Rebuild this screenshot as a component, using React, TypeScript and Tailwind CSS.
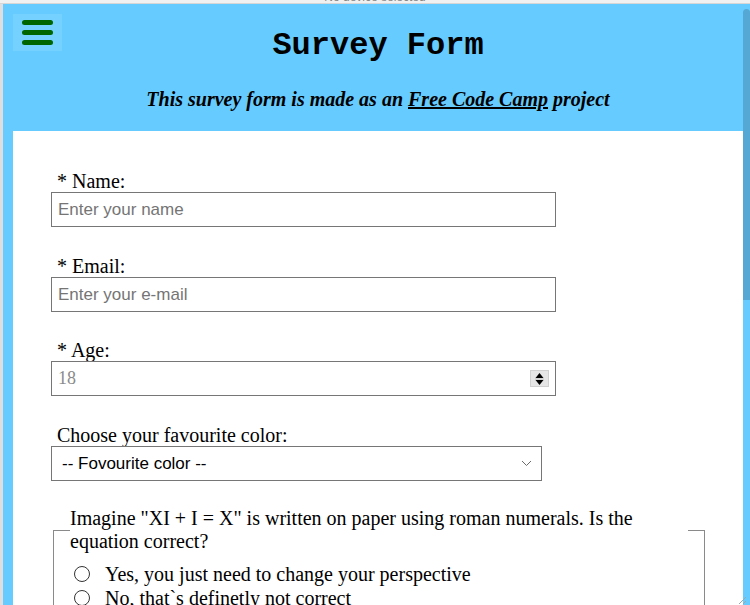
import React from "react";

const serif = "font-['Liberation_Serif',serif]";
const sans = "font-['Liberation_Sans',Arial,sans-serif]";

function Field({ label, placeholder, type = "text" }: { label: string; placeholder: string; type?: string }) {
	return (
		<div className="flex flex-col">
			<label className={`${serif} text-[20px] leading-[22px] pl-[6px] text-black`}>{label}</label>
			<input
				type={type}
				placeholder={placeholder}
				className={`${sans} w-[505px] h-[35px] border border-[#767676] px-[6px] text-[17px] placeholder:text-[#757575] outline-none`}
			/>
		</div>
	);
}

export default function App() {
	return (
		<div className="w-[750px] h-[605px] overflow-hidden flex flex-col bg-[#66ccff]">
			{/* devtools strip */}
			<div className="h-[4px] bg-[#f1f1f1] border-b border-[#d6d6d6] overflow-hidden flex justify-center">
				<span className={`${sans} text-[12px] leading-[12px] -mt-[9px] text-[#888]`}>No device selected</span>
			</div>

			<div className="flex flex-1 min-h-0">
				<div className="w-[3px] bg-[#dedede]" />

				<div className="flex-1 flex flex-col pl-[10px] min-w-0">
					{/* header */}
					<header className="pt-[10px] pb-[20px]">
						<div className="grid grid-cols-[49px_1fr_49px]">
							<button className="h-[37px] bg-white/10 flex flex-col items-center justify-center gap-[5px]">
								<span className="block w-[31px] h-[5px] rounded-full bg-[#006600]" />
								<span className="block w-[31px] h-[5px] rounded-full bg-[#006600]" />
								<span className="block w-[31px] h-[5px] rounded-full bg-[#006600]" />
							</button>
							<h1 className="mt-[14px] text-center font-['Liberation_Mono',monospace] font-bold text-[32px] leading-[36px] text-black">
								Survey Form
							</h1>
							<div />
						</div>
						<p className={`${serif} mt-[24px] text-center italic font-bold text-[20px] leading-[23px] text-black`}>
							This survey form is made as an <a className="underline">Free Code Camp</a> project
						</p>
					</header>

					{/* form */}
					<form className="flex-1 bg-white pt-[39px] pl-[38px] flex flex-col">
						<Field label="* Name:" placeholder="Enter your name" />
						<div className="h-[28px]" />
						<Field label="* Email:" placeholder="Enter your e-mail" type="email" />
						<div className="h-[27px]" />
						<div className="flex flex-col">
							<label className={`${serif} text-[20px] leading-[22px] pl-[6px] text-black`}>* Age:</label>
							<div className="w-[505px] h-[35px] border border-[#767676] flex items-center pr-[6px]">
								<input
									placeholder="18"
									className={`${serif} flex-1 min-w-0 h-full px-[6px] text-[18px] placeholder:text-[#8a8a8a] outline-none`}
								/>
								<div className="w-[19px] h-[17px] bg-[#e6e6e6] border border-[#d0d0d0] flex flex-col items-center justify-center">
									<svg width="9" height="14" viewBox="0 0 9 14">
										<path d="M4.5 1L8.5 6H0.5Z" fill="#000" />
										<path d="M0 7H9" stroke="#bdbdbd" />
										<path d="M4.5 13L8.5 8H0.5Z" fill="#000" />
									</svg>
								</div>
							</div>
						</div>
						<div className="h-[28px]" />
						<div className="flex flex-col">
							<label className={`${serif} text-[20px] leading-[22px] pl-[6px] text-black`}>Choose your favourite color:</label>
							<div className="w-[491px] h-[35px] border border-[#767676] flex items-center pl-[10px] pr-[9px]">
								<span className={`${sans} flex-1 text-[17px] text-black`}>-- Fovourite color --</span>
								<svg width="11" height="7" viewBox="0 0 11 7">
									<path d="M1 1L5.5 5.5L10 1" fill="none" stroke="#6b6b6b" strokeWidth="1" />
								</svg>
							</div>
						</div>

						<fieldset className="mt-[26px] ml-[2px] w-[652px] border border-[#8a8a8a] px-[16px] pb-[10px]">
							<legend className={`${serif} text-[20px] leading-[23px] text-black`}>
								Imagine "XI + I = X" is written on paper using roman numerals. Is the equation correct?
							</legend>
							<div className="pt-[9px] flex flex-col">
								<label className={`${serif} flex items-center h-[24px] text-[20px] text-black`}>
									<span className="ml-[4px] w-[16px] h-[16px] rounded-full border border-[#333]" />
									<span className="ml-[15px]">Yes, you just need to change your perspective</span>
								</label>
								<label className={`${serif} flex items-center h-[24px] text-[20px] text-black`}>
									<span className="ml-[4px] w-[16px] h-[16px] rounded-full border border-[#333]" />
									<span className="ml-[15px]">No, that`s definetly not correct</span>
								</label>
							</div>
						</fieldset>
					</form>
				</div>

				{/* scrollbar */}
				<div className="w-[7px] flex flex-col">
					<div className="mt-[5px] h-[291px] rounded-t-[4px] bg-[#55a8d4]" />
					<div className="flex-1" />
					<svg width="7" height="14" viewBox="0 0 7 14" className="-ml-[4px]">
						<path d="M11 2L0 13M11 6L4 13" stroke="#9aa" strokeWidth="1" />
					</svg>
				</div>
			</div>
		</div>
	);
}
